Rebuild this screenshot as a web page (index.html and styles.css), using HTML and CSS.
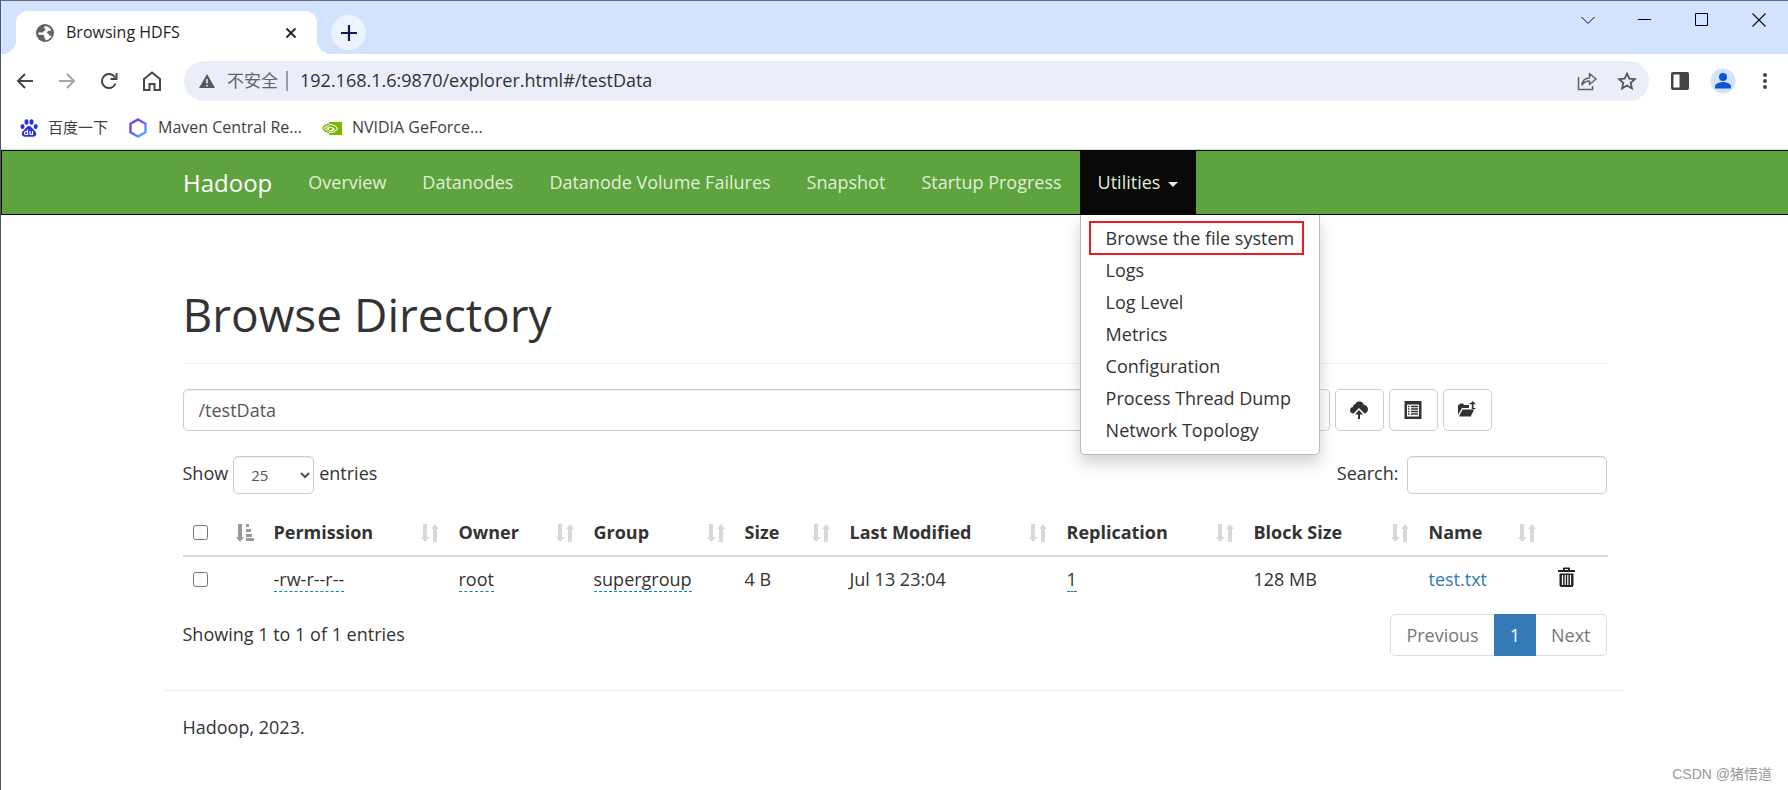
FILE: index.html
```html
<!DOCTYPE html>
<html lang="en">
<head>
<meta charset="utf-8">
<title>Browsing HDFS</title>
<link rel="stylesheet" href="styles.css">
</head>
<body>
<svg class="defs" aria-hidden="true">
  <symbol id="sort" viewBox="0 0 18 18"><path d="M2 0h4v13h3l-5 5-4-5h2zM12 18h4V5h2l-4-5-4 5h2z"/></symbol>
</svg>
<div class="window">
  <header class="chrome">
    <div class="tabstrip">
      <div class="tab">
        <svg class="ic18" viewBox="0 0 18 18"><circle cx="9" cy="9" r="9" fill="#5f6368"/><path d="M9.500 2c-2 1-2 2.500-.5 2.800 1.300.3.800 1.700-.5 2-1.400.3-1 1.700-2.500 1.700H2.200c0 1 .3 1.700.6 2.300h3.700c1.500 0 1.800 1.200 1.800 2.300s.2 1.700 1.200 1.700c-.3 1-.3 1.500.3 1.500 3-.4 5.300-2.300 6-5.300-1 1-2.200.9-2.700-.3-.5-1.300-1.600-1-2.200-2 .5-1.300 1.500-1.900 2.500-1.900h2C14.800 4.500 12.500 2.300 9.500 2z" fill="#fff"/></svg>
        <span class="tab-title">Browsing HDFS</span>
        <button class="plain" aria-label="Close tab"><svg class="ic12" viewBox="0 0 12 12"><path d="M1.500 1.500l9 9m0-9l-9 9" stroke="#202124" stroke-width="1.800"/></svg></button>
      </div>
      <button class="new-tab" aria-label="New tab"><svg class="ic16" viewBox="0 0 16 16"><path d="M8 0v16M0 8h16" stroke="#0b1f50" stroke-width="2.200"/></svg></button>
      <div class="controls">
        <button class="plain" aria-label="Search tabs"><svg class="ic14" viewBox="0 0 14 14"><path d="M.5 4l6.500 6.500L13.500 4" fill="none" stroke="#111"/></svg></button>
        <button class="plain" aria-label="Minimize"><svg class="ic14" viewBox="0 0 14 14"><path d="M0 6.500h13" stroke="#000"/></svg></button>
        <button class="plain" aria-label="Maximize"><svg class="ic14" viewBox="0 0 14 14"><path d="M.5.5h12v12H.5z" fill="none" stroke="#000"/></svg></button>
        <button class="plain" aria-label="Close"><svg class="ic14" viewBox="0 0 14 14"><path d="M.5.5l13 13m0-13l-13 13" stroke="#111" stroke-width="1.200"/></svg></button>
      </div>
    </div>
    <div class="toolbar">
      <div class="nav-buttons">
        <button class="plain" aria-label="Back"><svg class="ic18" viewBox="0 0 18 18"><path d="M17 9H2.500M9 2L2 9l7 7" fill="none" stroke="#44474a" stroke-width="2"/></svg></button>
        <button class="plain" aria-label="Forward"><svg class="ic18" viewBox="0 0 18 18"><path d="M1 9h14.500M9 2l7 7-7 7" fill="none" stroke="#a5a7aa" stroke-width="2"/></svg></button>
        <button class="plain" aria-label="Reload"><svg class="ic18" viewBox="0 0 18 18"><path d="M15.500 11.500A7 7 0 1 1 15 5.500" fill="none" stroke="#44474a" stroke-width="2"/><path d="M17.500 1v7h-7V6h5V1z" fill="#44474a"/></svg></button>
        <button class="plain" aria-label="Home"><svg class="ic20" viewBox="0 0 20 20"><path d="M2 8l8-6.500L18 8v11h-5.500v-6h-5v6H2z" fill="none" stroke="#44474a" stroke-width="2"/></svg></button>
      </div>
      <div class="omnibox">
        <svg class="ic16" viewBox="0 0 16 16"><path d="M8 1l8 14H0z" fill="#55585d"/><path d="M8 6v4.500M8 12v1.500" stroke="#e9eef8" stroke-width="1.600"/></svg>
        <span class="insecure">不安全</span>
        <input class="url" type="text" aria-label="Address" value="192.168.1.6:9870/explorer.html#/testData">
        <button class="plain" aria-label="Share"><svg class="ic20" viewBox="0 0 20 20"><path d="M1.500 6v12.500h14V15" fill="none" stroke="#5f6368" stroke-width="1.500"/><path d="M5 14c.5-5 3-7 7.500-7V2.500L19 8l-6.500 5.500V10C9 10 7 11 5 14z" fill="none" stroke="#5f6368" stroke-width="1.500" stroke-linejoin="round"/></svg></button>
        <button class="plain" aria-label="Bookmark"><svg class="ic20" viewBox="0 0 20 20"><path d="M10 2.500l2.300 5.200 5.700.5-4.300 3.700 1.300 5.600-5-3-5 3 1.300-5.600L2 8.200l5.700-.5z" fill="none" stroke="#505357" stroke-width="1.700"/></svg></button>
      </div>
      <div class="side">
        <button class="plain" aria-label="Side panel"><svg class="ic18" viewBox="0 0 18 18"><rect width="18" height="18" rx="2" fill="#444"/><path d="M2.500 2.500h6v13h-6z" fill="#fff"/></svg></button>
        <button class="plain" aria-label="Profile"><svg class="ic26" viewBox="0 0 26 26"><circle cx="13" cy="13" r="12.500" fill="#d3e3fd"/><circle cx="13" cy="9" r="4" fill="#0b57d0"/><path d="M5 20.500v-2c0-3 5-4.500 8-4.500s8 1.500 8 4.500v2z" fill="#0b57d0"/></svg></button>
        <button class="plain" aria-label="Menu"><svg class="ic16" viewBox="0 0 16 16"><g fill="#44474a"><circle cx="8" cy="2" r="2"/><circle cx="8" cy="8" r="2"/><circle cx="8" cy="14" r="2"/></g></svg></button>
      </div>
    </div>
    <nav class="bookmarks">
      <a href="#"><svg class="ic18" viewBox="0 0 18 18"><g fill="#2932e1"><ellipse cx="2.500" cy="7.500" rx="2" ry="2.600"/><ellipse cx="6.500" cy="3" rx="2" ry="2.800"/><ellipse cx="11.500" cy="3" rx="2" ry="2.800"/><ellipse cx="15.700" cy="7.500" rx="2" ry="2.600"/><path d="M9 7c2 0 3 2 4.500 3.500s3 2.500 2.700 4.700c-.4 3-3 2.500-7.200 2.500s-6.800.5-7.200-2.500C1.500 13 3 12 4.500 10.500S7 7 9 7z"/></g><path d="M7.500 10.500v5H6a1.400 1.400 0 0 1 0-3h1.500M10 12v2.500q0 1 1 1h1.500V12" fill="none" stroke="#fff" stroke-width="1.200"/></svg><span class="cjk">百度一下</span></a>
      <a href="#"><svg class="ic20" viewBox="0 0 20 20"><defs><linearGradient id="hex" x2="1" y2="1"><stop offset=".3" stop-color="#7545ef"/><stop offset=".8" stop-color="#5c9dff"/></linearGradient></defs><path d="M10 1.500l7.500 4.200v8.600L10 18.500l-7.500-4.200V5.700z" fill="none" stroke="url(#hex)" stroke-width="2.400"/></svg>Maven Central Re...</a>
      <a href="#"><svg class="ic20" viewBox="0 0 20 20"><path d="M7 4h13v13H7z" fill="#76b900"/><path d="M7 6.500C4.500 6.500 2 8 1 10c1.500 3 4 4.500 6.500 4.500" fill="none" stroke="#76b900" stroke-width="1.500"/><path d="M7 6.500c5 0 7 1.500 8.500 4C13 14 10 15 7 14.300M7 9c3 0 4 1 5 2-1.500 1.500-3 2-5 1.500" fill="none" stroke="#fff" stroke-width="1.200"/><path d="M7 8.500c-2 .3-3 1-3.500 1.800.8 1.300 2 2.200 3.500 2.400" fill="none" stroke="#76b900" stroke-width="1.200"/></svg>NVIDIA GeForce...</a>
    </nav>
  </header>

  <nav class="navbar">
    <div class="container navbar-row">
      <a class="brand" href="#">Hadoop</a>
      <a class="nav-link" href="#">Overview</a>
      <a class="nav-link" href="#">Datanodes</a>
      <a class="nav-link" href="#">Datanode Volume Failures</a>
      <a class="nav-link" href="#">Snapshot</a>
      <a class="nav-link" href="#">Startup Progress</a>
      <div class="dropdown">
        <a class="nav-link open" href="#">Utilities<span class="caret"></span></a>
        <ul class="menu">
          <li class="marked"><a href="#">Browse the file system</a></li>
          <li><a href="#">Logs</a></li>
          <li><a href="#">Log Level</a></li>
          <li><a href="#">Metrics</a></li>
          <li><a href="#">Configuration</a></li>
          <li><a href="#">Process Thread Dump</a></li>
          <li><a href="#">Network Topology</a></li>
        </ul>
      </div>
    </div>
  </nav>

  <main class="container">
    <h1>Browse Directory</h1>
    <div class="path-row">
      <div class="path-group">
        <input class="field path" type="text" aria-label="Directory" value="/testData">
        <button class="btn go">Go!</button>
      </div>
      <button class="btn" aria-label="Upload files"><svg class="ic18" viewBox="0 0 18 18"><path d="M3.500 12.500C1 12.500 0 11 0 9.300 0 7.500 1.300 6.200 3 6c-.2-1.800 1-3 2.300-2.800C6 1 8 .5 9.500.5c2.300 0 4 1.500 4.300 3.500C16.500 4 18 6 18 8.300c0 2.200-1.500 4-3.500 4.200L9 7z" fill="#333"/><path d="M9 9l4 4.500h-3V18H8v-4.500H5z" fill="#333"/></svg></button>
      <button class="btn" aria-label="Create directory"><svg class="ic18" viewBox="0 0 18 18"><path d="M.5 0h17v18H.5zM3 3.500v12h12v-12z" fill="#333" fill-rule="evenodd"/><path d="M4 5.500h1.500M7 5.500h7M4 8h1.500M7 8h7M4 10.500h1.500M7 10.500h7M4 13h1.500M7 13h7" stroke="#333" stroke-width="1.300"/></svg></button>
      <button class="btn" aria-label="Cut and paste"><svg class="ic18" viewBox="0 0 18 18"><path d="M0 14V4h1l1-1.500h3L6 4h5v3H4z" fill="#333"/><path d="M4.500 8.500h11.700l-3.500 7H1z" fill="#333"/><path d="M14.500 0L18 3.300h-2.500V7h2v1h-3.700V3.300H11.500V2H13z" fill="#333"/></svg></button>
    </div>

    <div class="bar">
      <label class="length">Show <select class="field small"><option>25</option></select> entries</label>
      <label class="search">Search: <input class="field small" type="search"></label>
    </div>

    <table>
      <colgroup><col class="c-check"><col class="c-perm"><col class="c-owner"><col class="c-group"><col class="c-size"><col class="c-mod"><col class="c-repl"><col class="c-block"><col class="c-name"><col class="c-trash"></colgroup>
      <thead>
        <tr>
          <th><div class="head"><input type="checkbox" aria-label="Select all"><svg class="asc" viewBox="0 0 18 18"><path d="M2 0h4v13h2l-4 5-4-5h2zM10 0h3v3h-3zM10 5h5v3h-5zM10 10h6v3h-6zM10 14h8v3h-8z"/></svg></div></th>
          <th><div class="head">Permission<svg class="sort"><use href="#sort"/></svg></div></th>
          <th><div class="head">Owner<svg class="sort"><use href="#sort"/></svg></div></th>
          <th><div class="head">Group<svg class="sort"><use href="#sort"/></svg></div></th>
          <th><div class="head">Size<svg class="sort"><use href="#sort"/></svg></div></th>
          <th><div class="head">Last Modified<svg class="sort"><use href="#sort"/></svg></div></th>
          <th><div class="head">Replication<svg class="sort"><use href="#sort"/></svg></div></th>
          <th><div class="head">Block Size<svg class="sort"><use href="#sort"/></svg></div></th>
          <th><div class="head">Name<svg class="sort"><use href="#sort"/></svg></div></th>
          <th></th>
        </tr>
      </thead>
      <tbody>
        <tr>
          <td><div class="head"><input type="checkbox" aria-label="Select test.txt"></div></td>
          <td><span class="editable">-rw-r--r--</span></td>
          <td><span class="editable">root</span></td>
          <td><span class="editable">supergroup</span></td>
          <td>4 B</td>
          <td>Jul 13 23:04</td>
          <td><span class="editable">1</span></td>
          <td>128 MB</td>
          <td><a class="file" href="#">test.txt</a></td>
          <td><button class="plain trash" aria-label="Delete"><svg viewBox="0 0 17 21"><path d="M5 3V1.500Q5 .5 6 .5h5q1 0 1 1V3h5v2H0V3zM7 2v1h3V2zM1.500 6.500h14V18q0 2-2 2h-10q-2 0-2-2z" fill="#222" fill-rule="evenodd"/><path d="M4.500 8v10M7.200 8v10M9.800 8v10M12.500 8v10" stroke="#fff" stroke-width="1.200"/></svg></button></td>
        </tr>
      </tbody>
    </table>

    <div class="foot">
      <span>Showing 1 to 1 of 1 entries</span>
      <div class="pages">
        <a href="#">Previous</a><a class="current" href="#">1</a><a href="#">Next</a>
      </div>
    </div>
  </main>
  <footer class="container site-foot">Hadoop, 2023.</footer>
  <span class="watermark">CSDN @猪悟道</span>
</div>
</body>
</html>
```
FILE: styles.css
```css
* { box-sizing: border-box; }
body {
  margin: 0;
  background: #fff;
  color: #333;
  font: 18px/25px "Open Sans", "Noto Sans CJK SC", sans-serif;
}
a { color: inherit; text-decoration: none; }
button, input, select { font: inherit; color: inherit; }
svg { display: block; flex: none; }
.defs { position: absolute; width: 0; height: 0; }
.ic12 { width: 12px; height: 12px; }
.ic14 { width: 14px; height: 14px; }
.ic16 { width: 16px; height: 16px; }
.ic18 { width: 18px; height: 18px; }
.ic20 { width: 20px; height: 20px; }
.ic26 { width: 26px; height: 26px; }
.plain { border: 0; padding: 0; background: none; flex: none; }

.window {
  position: relative;
  min-height: 100vh;
  border-top: 1px solid #676a78;
  border-left: 1px solid #55565e;
}

/* browser chrome */
.chrome { border-bottom: 1px solid #dcdcdc; }
.tabstrip {
  display: flex;
  align-items: flex-end;
  height: 53px;
  padding-left: 15px;
  background: #d3e3fd;
}
.tab {
  position: relative;
  display: flex;
  align-items: center;
  width: 301px;
  height: 43px;
  padding: 0 20px;
  border-radius: 12px 12px 0 0;
  background: #fff;
  color: #1f1f1f;
  font-size: 16px;
}
.tab::before, .tab::after {
  content: "";
  position: absolute;
  bottom: 0;
  width: 14px;
  height: 14px;
}
.tab::before { right: 100%; background: radial-gradient(circle at 0 0, transparent 14px, #fff 14px); }
.tab::after { left: 100%; background: radial-gradient(circle at 100% 0, transparent 14px, #fff 14px); }
.tab-title { flex: 1; margin-left: 12px; }
.new-tab {
  display: grid;
  place-items: center;
  width: 35px;
  height: 35px;
  margin: 0 0 4px 14px;
  padding: 0;
  border: 0;
  border-radius: 50%;
  background: #edf3fe;
}
.controls { display: flex; align-self: flex-start; gap: 43px; margin-left: auto; padding: 12px 22px 0 0; }
.toolbar { display: flex; align-items: center; padding: 7px 15px; }
.nav-buttons { display: flex; align-items: center; gap: 24px; width: 168px; }
.omnibox {
  display: flex;
  align-items: center;
  flex: 1;
  height: 40px;
  padding: 0 12px 0 15px;
  border-radius: 20px;
  background: #e9eef8;
}
.insecure { margin: 0 12px; padding-right: 8px; border-right: 2px solid #9a9ea6; color: #5f6368; font-size: 17px; line-height: 20px; }
.url { flex: 1; min-width: 0; padding: 0 0 2px; border: 0; background: none; color: #303236; }
.omnibox .plain + .plain { margin-left: 20px; }
.side { display: flex; align-items: center; gap: 21px; margin-left: 22px; }
.bookmarks { display: flex; align-items: center; gap: 20px; height: 41px; padding: 0 0 2px 19px; color: #3c4043; font-size: 16px; }
.bookmarks a { display: flex; align-items: center; gap: 10px; }
.cjk { font-size: 15px; }

/* page */
.container { max-width: 1462px; margin: 0 auto; padding: 0 19px; }
.navbar { border: 1px solid #080808; border-right: 0; background: #5fa33e; color: #dff0d8; }
.navbar-row { display: flex; align-items: stretch; line-height: 63px; }
.brand { padding-right: 18px; color: #fff; font-size: 24px; }
.nav-link { display: block; padding: 0 18px; }
.open { background: #080808; }
.caret { display: inline-block; margin-left: 8px; border: 5px solid transparent; border-top-color: currentColor; border-bottom: 0; vertical-align: middle; }
.dropdown { position: relative; }
.menu {
  position: absolute;
  top: 100%;
  left: 0;
  z-index: 5;
  margin: 1px 0 0;
  padding: 7px 0 8px;
  border: 1px solid #bbb;
  border-top: 0;
  border-radius: 0 0 5px 5px;
  background: #fff;
  box-shadow: 0 8px 15px rgba(0, 0, 0, .18);
  color: #333;
  line-height: 24px;
  list-style: none;
  white-space: nowrap;
}
.menu a { display: block; padding: 4px 25px; }
.marked { position: relative; }
.marked::after { content: ""; position: absolute; inset: -1px 15px -1px 8px; border: 2px solid #ed1c24; }

h1 { margin: 74px 0 25px; padding-bottom: 24px; border-bottom: 1px solid #eee; font-size: 46px; font-weight: 400; line-height: 50px; }
.path-row { display: flex; gap: 5px; margin-right: 115px; }
.path-group { display: flex; flex: 1; }
.field { border: 1px solid #ccc; border-radius: 5px; background: #fff; color: #555; box-shadow: inset 0 1px 1px rgba(0, 0, 0, .075); }
.path { flex: 1; min-width: 0; height: 42px; padding: 0 15px; border-radius: 5px 0 0 5px; }
.btn { display: grid; place-items: center; width: 49px; height: 42px; padding: 0; border: 1px solid #ccc; border-radius: 5px; background: #fff; }
.go { width: 58px; border-left: 0; border-radius: 0 5px 5px 0; }
.bar { display: flex; justify-content: space-between; margin-top: 25px; }
.length, .search { display: flex; gap: 5px; line-height: 34px; }
.small { height: 38px; font-size: 15px; }
select.small { width: 81px; padding: 0 15px 0 13px; }
.search { gap: 8px; }
.search .small { width: 200px; }

table { width: 100%; margin-top: 16px; border-collapse: collapse; table-layout: fixed; }
.c-check { width: 81px; }
.c-perm { width: 185px; }
.c-owner { width: 135px; }
.c-group { width: 151px; }
.c-size { width: 105px; }
.c-mod { width: 217px; }
.c-repl { width: 187px; }
.c-block { width: 175px; }
.c-name { width: 127px; }
.c-trash { width: 62px; }
th, td { padding: 10px; text-align: left; vertical-align: top; }
th { border-bottom: 2px solid #ddd; }
.head { display: flex; align-items: center; justify-content: space-between; height: 25px; }
.head input { width: 15px; height: 15px; margin: 0; }
.sort, .asc { width: 18px; height: 18px; }
.sort { fill: #d8d8d8; }
.asc { fill: #999; }
.editable { display: inline-block; border-bottom: 1px dashed #08c; line-height: 24px; }
.file { color: #337ab7; }
.trash { margin-left: 2px; }
.trash svg { width: 17px; height: 21px; }
.foot { display: flex; justify-content: space-between; margin-top: 10px; line-height: 40px; }
.pages { display: flex; border: 1px solid #ddd; border-radius: 5px; color: #777; }
.pages a { padding: 0 15px; }
.pages .current { margin: -1px 0; padding: 1px 16px; background: #337ab7; color: #fff; }
.site-foot { margin-top: 34px; padding-top: 24px; border-top: 1px solid #eee; }
.watermark { position: absolute; right: 16px; bottom: 6px; color: #999; font: 14px/20px "Liberation Sans", "Noto Sans CJK SC", sans-serif; }
```
